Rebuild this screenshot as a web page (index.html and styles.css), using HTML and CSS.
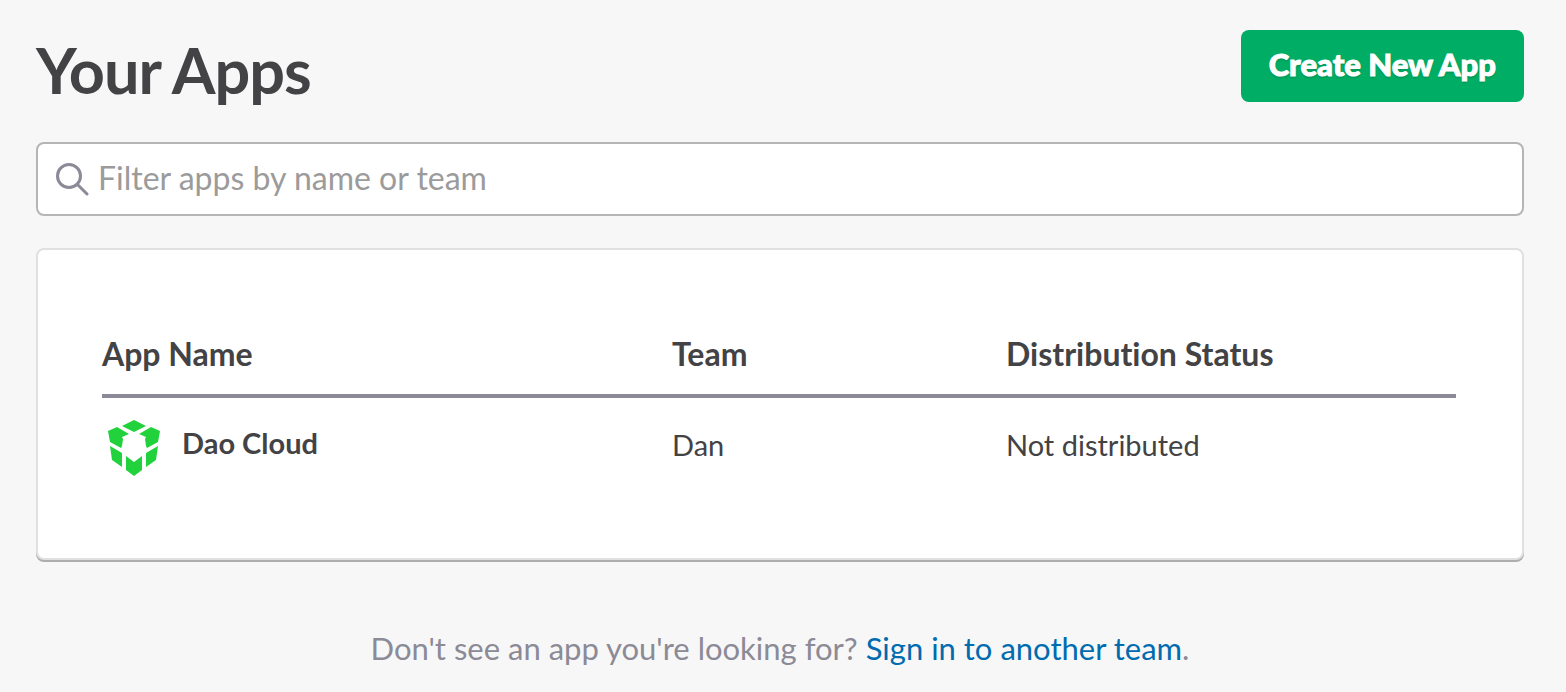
FILE: index.html
```html
<!DOCTYPE html>
<html lang="en">
<head>
<meta charset="utf-8">
<meta name="viewport" content="width=device-width, initial-scale=1">
<title>Your Apps</title>
<link rel="stylesheet" href="styles.css">
</head>
<body>
<main class="page">
  <header class="page-header">
    <h1 class="title">Your Apps</h1>
    <button class="create-button" type="button">Create New App</button>
  </header>
  <label class="filter">
    <svg class="filter-icon" viewBox="0 0 34 34" aria-hidden="true"><circle cx="13" cy="14" r="11.5"/><path d="M21.500 22.500l9.500 9.500"/></svg>
    <input class="filter-input" type="text" placeholder="Filter apps by name or team" aria-label="Filter apps by name or team">
  </label>
  <section class="card">
    <table class="apps">
      <thead>
        <tr><th class="col-name" scope="col">App Name</th><th class="col-team" scope="col">Team</th><th scope="col">Distribution Status</th></tr>
      </thead>
      <tbody>
        <tr>
          <td>
            <a class="app" href="#">
              <svg class="app-icon" viewBox="0 0 64 64" aria-hidden="true">
                <path d="M32 4l12 6-12 6-12-6z"/>
                <path d="M6 15l9-4 12 7-7 3 1 2-1 7-1 2L8 26z"/>
                <path d="M58 15l-9-4-12 7 7 3-1 2 1 7 1 2 11-6z"/>
                <path d="M8 30l12 7v14l-10-7z"/>
                <path d="M56 30l-12 7v14l10-7z"/>
                <path d="M24 40l8 6 8-6v14l-8 6-8-6z"/>
              </svg>
              <span class="app-name">Dao Cloud</span>
            </a>
          </td>
          <td class="cell">Dan</td>
          <td class="cell">Not distributed</td>
        </tr>
      </tbody>
    </table>
  </section>
  <p class="footnote">Don't see an app you're looking for? <a class="link" href="#">Sign in to another team</a>.</p>
</main>
</body>
</html>
```
FILE: styles.css
```css
* { box-sizing: border-box; }
body { margin: 0; background: #f7f7f7; color: #434245; font-family: Lato, sans-serif; font-size: 29px; line-height: 40px; font-variant-ligatures: none; }
.page { padding: 30px 42px 20px 36px; }
.page-header { display: flex; justify-content: space-between; align-items: flex-start; margin-bottom: 40px; }
.title { margin: 0; padding-top: 8px; font-size: 63px; line-height: 64px; font-weight: 700; letter-spacing: -1px; }
.create-button { height: 72px; padding: 0 28px 4px; border: 0; border-radius: 8px; background: #00ad64; color: #fff; font: 900 31px/40px Lato, sans-serif; -webkit-text-stroke: 1px #fff; text-shadow: 0 2px 2px rgba(0, 0, 0, .15); }
.filter { display: flex; align-items: center; gap: 8px; height: 74px; padding: 0 18px; border: 2px solid #b5b5b5; border-radius: 8px; background: #fff; }
.filter-icon { flex: none; width: 34px; height: 34px; fill: none; stroke: #8b8a96; stroke-width: 3; stroke-linecap: round; }
.filter-input { flex: 1; min-width: 0; padding: 0 0 2px; border: 0; outline: 0; background: none; color: inherit; font: 32px/44px Lato, sans-serif; }
.filter-input::placeholder { color: #9b9b9b; opacity: 1; }
.card { margin-top: 32px; padding: 76px 66px 66px 64px; border: 2px solid #e0e0e0; border-radius: 8px; background: #fff; box-shadow: 0 2px 0 #adadad; }
.apps { width: 100%; border-collapse: collapse; table-layout: fixed; }
.apps th { padding: 8px 0 20px; border-bottom: 4px solid #8b8a96; font-size: 32px; font-weight: 700; text-align: left; }
.col-name { width: 570px; }
.col-team { width: 334px; }
.apps td { padding: 18px 0 12px; vertical-align: middle; }
.apps .cell { padding-bottom: 18px; }
.app { display: flex; align-items: center; gap: 16px; color: inherit; font-weight: 700; text-decoration: none; }
.app-name { padding-bottom: 10px; }
.app-icon { width: 64px; height: 64px; fill: #22d23c; }
.footnote { margin: 68px 0 0; color: #8b8a96; font-size: 31px; line-height: 40px; text-align: center; }
.link { color: #006baf; text-decoration: none; }
```
